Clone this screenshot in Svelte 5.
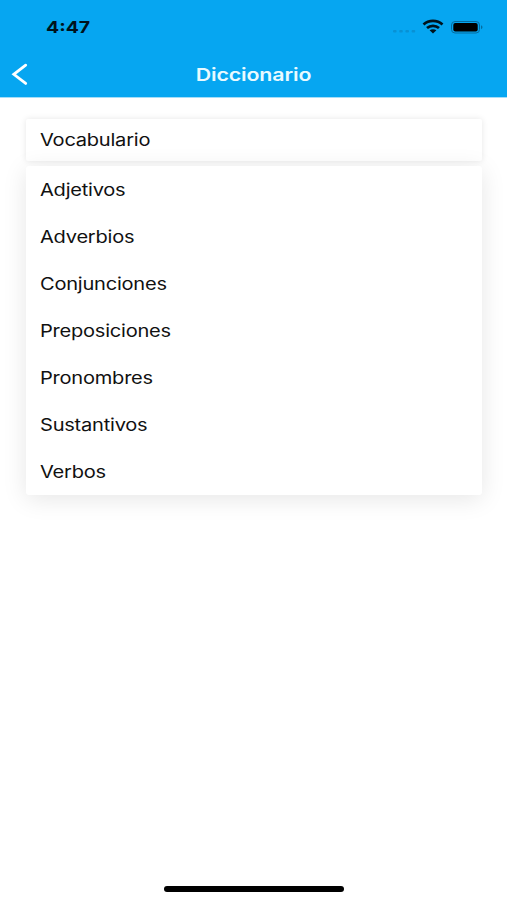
<script lang="ts">
  const time = "4:47";
  const title = "Diccionario";
  const selected = "Vocabulario";

  const categories: string[] = [
    "Adjetivos",
    "Adverbios",
    "Conjunciones",
    "Preposiciones",
    "Pronombres",
    "Sustantivos",
    "Verbos",
  ];
</script>

<div class="screen">
  <header>
    <div class="status-bar">
      <span class="time"><span class="wide">{time}</span></span>
      <svg class="status-icons" width="94" height="20" viewBox="0 0 94 20" aria-hidden="true">
        <!-- Cellular dots -->
        <g fill="#0891d4">
          <rect x="3" y="13" width="3.6" height="2.6" rx="1" />
          <rect x="9.2" y="13" width="3.6" height="2.6" rx="1" />
          <rect x="15.4" y="13" width="3.6" height="2.6" rx="1" />
          <rect x="21.6" y="13" width="3.6" height="2.6" rx="1" />
        </g>
        <!-- Wifi -->
        <g fill="none" stroke="#00131d" stroke-width="2.7">
          <path d="M33.5 7.6C38.8 2.7 47.2 2.7 52.5 7.6" />
          <path d="M37 11.1C40.4 8 45.6 8 49 11.1" />
        </g>
        <path d="M39.6 13.3C41.5 11.8 44.5 11.8 46.4 13.3L43 16.4Z" fill="#00131d" />
        <!-- Battery -->
        <rect x="61.5" y="4.5" width="28" height="11.5" rx="3.5" fill="none" stroke="#056c9f" />
        <rect x="63.3" y="6" width="24.4" height="8.6" rx="2" fill="#000" />
        <path d="M91 8.3C93 9 93 11.5 91 12.2Z" fill="#056c9f" />
      </svg>
    </div>
    <nav>
      <button class="back" aria-label="Volver">
        <svg width="18" height="24" viewBox="0 0 18 24">
          <path d="M14.7 2.2L2.8 11.3L14.7 20.4" fill="none" stroke="#fff" stroke-width="2.8" stroke-linecap="round" />
        </svg>
      </button>
      <h1>{title}</h1>
    </nav>
  </header>

  <main>
    <div class="select"><span class="wide">{selected}</span></div>
    <ul class="options">
      {#each categories as category}
        <li><span class="wide">{category}</span></li>
      {/each}
    </ul>
  </main>

  <div class="home-indicator"></div>
</div>

<style>
  .screen {
    display: flex;
    flex-direction: column;
    box-sizing: border-box;
    width: 507px;
    height: 900px;
    padding-bottom: 8px;
    overflow: hidden;
    background: #fff;
    color: #111;
    font-family: Inter, "Liberation Sans", sans-serif;
    font-size: 17px;
    letter-spacing: -0.2px;
  }

  header {
    height: 97px;
    background: #06a6f1;
    border-bottom: 1px solid #a5ddf8;
  }

  .status-bar {
    display: flex;
    justify-content: space-between;
    align-items: center;
    height: 54px;
    padding: 0 23px 0 46px;
    color: #00131d;
  }

  .time {
    font-size: 16.5px;
    font-weight: 650;
    letter-spacing: 0;
  }

  /* Labels use an extended width */
  .wide {
    display: inline-block;
    transform: scaleX(1.18);
    transform-origin: left center;
  }

  nav {
    display: grid;
    grid-template-columns: 40px 1fr 40px;
    align-items: center;
    height: 41px;
  }

  .back {
    display: flex;
    padding: 0 0 0 11px;
    border: 0;
    background: none;
  }

  h1 {
    margin: 0;
    color: #e9faff;
    font-size: 17.5px;
    font-weight: 600;
    letter-spacing: -0.1px;
    text-align: center;
    transform: scaleX(1.22);
  }

  main {
    flex: 1;
    padding: 21px 25px 0 26px;
  }

  .select {
    display: flex;
    align-items: center;
    height: 42px;
    padding-left: 13.5px;
    border-radius: 2px;
    box-shadow: 0 0 6px rgba(0, 0, 0, 0.1);
  }

  .options {
    margin: 5px 0 0;
    padding: 0;
    list-style: none;
    background: #fff;
    border-radius: 3px;
    box-shadow: 0 4px 24px rgba(0, 0, 0, 0.1);
  }

  .options li {
    display: flex;
    align-items: center;
    height: 47px;
    padding-left: 13.5px;
  }

  .home-indicator {
    align-self: center;
    width: 180px;
    height: 6px;
    border-radius: 3px;
    background: #000;
  }
</style>
